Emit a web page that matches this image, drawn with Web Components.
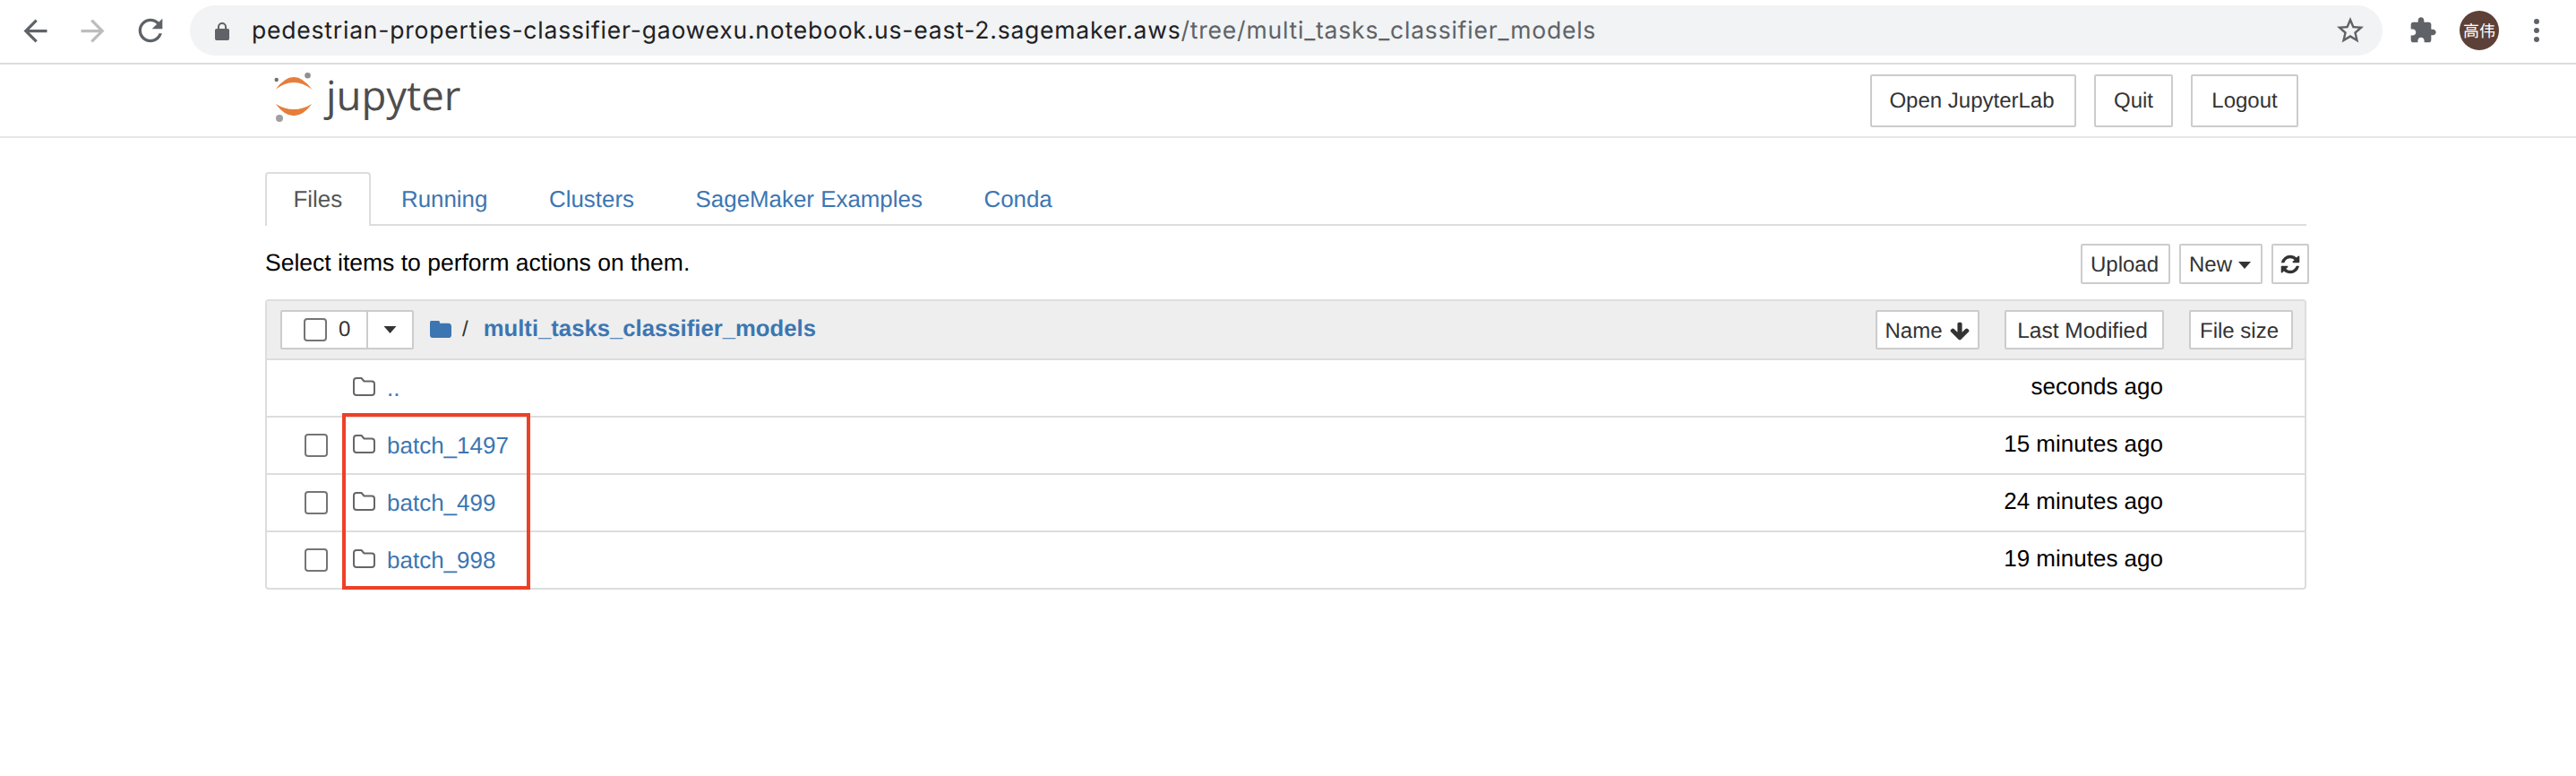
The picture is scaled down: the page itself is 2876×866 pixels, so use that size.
<!DOCTYPE html>
<html lang="en"><head><meta charset="utf-8"><title>Jupyter</title>
<style>html,body{margin:0;padding:0;background:#fff;font-family:"Liberation Sans",Arial,sans-serif;color:#333;text-rendering:geometricPrecision;}</style>
</head><body>
<browser-bar></browser-bar>
<jupyter-header></jupyter-header>
<main-area>
  <tab-strip></tab-strip>
  <file-toolbar></file-toolbar>
  <file-panel>
    <file-row name=".." date="seconds ago" noselect></file-row>
    <file-row name="batch_1497" date="15 minutes ago"></file-row>
    <file-row name="batch_499" date="24 minutes ago"></file-row>
    <file-row name="batch_998" date="19 minutes ago"></file-row>
    <red-highlight slot="overlay"></red-highlight>
  </file-panel>
</main-area>
<script>
function def(name, css, html, setup){
  customElements.define(name, class extends HTMLElement{
    constructor(){super();const r=this.attachShadow({mode:'open'});
      r.innerHTML='<style>'+css+'</style>'+(typeof html==='function'?html(this):html);}
    connectedCallback(){
      if(setup) setup(this,this.shadowRoot);
    }
  });
}
const BLUE='#3c76b2';
const BTN='box-sizing:border-box;display:inline-flex;align-items:center;justify-content:center;background:#fff;border:2px solid #ccc;color:#333;font-size:24px;padding-top:2px;';

def('browser-bar',`
:host{display:flex;box-sizing:border-box;height:72px;border-bottom:2px solid #dcdcdc;align-items:center;padding:0 0 2px 0;background:#fff}
svg{display:block;flex:none}
.nav{display:flex;align-items:center;padding-left:20px;width:212px;box-sizing:border-box}
.omni{box-sizing:border-box;width:2448px;height:56px;border-radius:28px;background:#f1f3f4;display:flex;align-items:center;padding-left:28px;flex:none}
.url{font:26.5px Inter,Roboto,"Liberation Sans",sans-serif;color:#202124;margin-left:25px;flex:1;white-space:nowrap;letter-spacing:.79px}
.url span{color:#5f6368}
.star{margin-right:18px}
.right{display:flex;align-items:center;margin-left:29px}
.avatar{width:44px;height:44px;border-radius:50%;background:#5d4037;color:#fff;display:flex;align-items:center;justify-content:center;font:18px "Noto Sans CJK SC",sans-serif;margin-left:25px}
.dots{margin-left:39px}
`,`<div class="nav">
<svg width="39" height="39" viewBox="0 0 24 24" fill="#5f6368"><path d="M20 11H7.830l5.590-5.590L12 4l-8 8 8 8 1.410-1.410L7.830 13H20v-2z"/></svg>
<svg style="margin-left:25px" width="39" height="39" viewBox="0 0 24 24" fill="#bdbdbd"><path d="M4 11h12.170l-5.590-5.590L12 4l8 8-8 8-1.410-1.410L16.170 13H4v-2z"/></svg>
<svg style="margin-left:25px" width="40" height="40" viewBox="0 0 24 24" fill="#5f6368"><path d="M17.650 6.350C16.200 4.900 14.210 4 12 4c-4.420 0-7.990 3.580-7.990 8s3.570 8 7.990 8c3.730 0 6.840-2.550 7.730-6h-2.080c-.82 2.330-3.040 4-5.650 4-3.310 0-6-2.690-6-6s2.690-6 6-6c1.660 0 3.140.69 4.220 1.780L13 11h7V4l-2.350 2.350z"/></svg>
</div>
<div class="omni">
<svg width="16" height="21" viewBox="0 0 16 21" fill="#5f6368"><path d="M3 8V6a5 5 0 0 1 10 0v2h1.200A1.800 1.800 0 0 1 16 9.800v9.400a1.800 1.800 0 0 1-1.800 1.800H1.800A1.800 1.800 0 0 1 0 19.200V9.800A1.800 1.800 0 0 1 1.800 8H3zm2 0h6V6a3 3 0 0 0-6 0v2z"/></svg>
<div class="url">pedestrian-properties-classifier-gaowexu.notebook.us-east-2.sagemaker.aws<span>/tree/multi_tasks_classifier_models</span></div>
<svg class="star" width="36" height="36" viewBox="0 0 24 24" fill="#5f6368"><path d="M22 9.240l-7.190-.62L12 2 9.190 8.630 2 9.240l5.460 4.730L5.820 21 12 17.270 18.180 21l-1.630-7.030L22 9.240zM12 15.400l-3.760 2.270 1-4.280-3.320-2.880 4.380-.38L12 6.100l1.710 4.040 4.380.38-3.320 2.880 1 4.280L12 15.400z"/></svg>
</div>
<div class="right">
<svg width="32" height="32" viewBox="0 0 24 24" fill="#5f6368"><path d="M20.500 11H19V7c0-1.100-.9-2-2-2h-4V3.500C13 2.120 11.880 1 10.500 1S8 2.120 8 3.500V5H4c-1.100 0-1.990.9-1.990 2v3.800H3.500c1.490 0 2.700 1.210 2.700 2.700s-1.210 2.700-2.700 2.700H2V20c0 1.100.9 2 2 2h3.800v-1.500c0-1.490 1.210-2.700 2.700-2.700 1.490 0 2.700 1.210 2.700 2.700V22H17c1.100 0 2-.9 2-2v-4h1.500c1.380 0 2.500-1.120 2.500-2.500S21.880 11 20.500 11z"/></svg>
<div class="avatar">高伟</div>
<svg class="dots" width="6" height="26" viewBox="0 0 6 26" fill="#5f6368"><circle cx="3" cy="3" r="3"/><circle cx="3" cy="13" r="3"/><circle cx="3" cy="23" r="3"/></svg>
</div>`);

def('jupyter-header',`
:host{display:flex;box-sizing:border-box;height:82px;border-bottom:2px solid #e7e7e7;align-items:center;padding-left:306px;background:#fff}
svg{display:block;flex:none}
.name{font:45.5px "Open Sans",sans-serif;color:#4e4e4e;margin-left:12px;line-height:60px;margin-top:-13px;width:1724px;flex:none}
.btn{${BTN}height:59px;margin-right:20px;border-radius:2px}
`,`<svg width="46" height="58" viewBox="306 82 46 58" style="margin-top:-8px">
<path fill="#e67e3a" d="M307.700 102.700Q328 75.300 348.300 102.700Q328 87.300 307.700 102.700z"/>
<path fill="#e67e3a" d="M307.700 119Q328 145.600 348.300 119Q328 131 307.700 119z"/>
<circle cx="343.500" cy="87.300" r="3.300" fill="#8f8f8f"/><circle cx="308.700" cy="92" r="2.200" fill="#6f6f6f"/><circle cx="312" cy="135" r="4" fill="#a0a0a0"/></svg>
<div class="name">jupyter</div>
<div class="btn" style="width:230px;padding-right:3px">Open JupyterLab</div>
<div class="btn" style="width:88px">Quit</div>
<div class="btn" style="width:120px">Logout</div>`);

def('main-area',`:host{display:block;box-sizing:border-box;padding:38px 0 0 296px;width:2575px}`,`<slot></slot>`);

def('tab-strip',`
:host{display:flex;box-sizing:border-box;height:60px;border-bottom:2px solid #ddd;font-size:25.9px}
.t{box-sizing:border-box;height:60px;padding:0 32.3px;display:flex;align-items:center;color:${BLUE};border:2px solid transparent;border-bottom:0}
.t.on{color:#555;background:#fff;border-color:#ddd;border-radius:4px 4px 0 0;padding:0 29.5px;}
`,`<div class="t on">Files</div><div class="t">Running</div><div class="t">Clusters</div><div class="t">SageMaker Examples</div><div class="t">Conda</div>`);

def('file-toolbar',`
:host{display:flex;align-items:center;height:82px;color:#000;font-size:25.7px;justify-content:space-between}
.txt{margin-top:0;font-size:26.5px}
.g{display:flex;gap:10px;margin-right:-3px;margin-top:3px}
.btn{${BTN}height:45px;border-radius:2px}
svg{display:block}
`,`<div class="txt">Select items to perform actions on them.</div>
<div class="g"><div class="btn" style="width:100px;padding-right:2px">Upload</div>
<div class="btn" style="width:93px;padding-right:2px">New<svg style="margin-left:7px" width="14" height="8" viewBox="0 0 14 8" fill="#333"><path d="M0 0h14L7 8z"/></svg></div>
<div class="btn" style="width:42px;padding:0"><svg width="24" height="24" viewBox="0 0 1792 1792" fill="#333"><path d="M1639 1056q0 5-1 7-64 268-268 434.500t-478 166.500q-146 0-282.500-55t-243.500-157l-129 129q-19 19-45 19t-45-19-19-45v-448q0-26 19-45t45-19h448q26 0 45 19t19 45-19 45l-137 137q71 66 161 102t187 36q134 0 250-65t186-179q11-17 53-117 8-23 30-23h192q13 0 22.500 9.500t9.500 22.500zm25-800v448q0 26-19 45t-45 19h-448q-26 0-45-19t-19-45 19-45l138-138q-148-137-349-137-134 0-250 65t-186 179q-11 17-53 117-8 23-30 23h-199q-13 0-22.500-9.500t-9.500-22.500v-7q65-268 270-434.500t480-166.500q146 0 284 55.500t245 156.500l130-129q19-19 45-19t45 19 19 45z"/></svg></div></div>`);

def('file-panel',`
:host{display:block;box-sizing:border-box;border:2px solid #ddd;border-radius:4px;position:relative}
.head{box-sizing:border-box;height:64px;background:#eee;display:flex;align-items:center;padding-left:15px;font-size:24px;color:#333}
.btn{${BTN}height:44px;border-radius:2px;padding-top:3px}
.grp{display:flex;width:149px;height:44px;box-sizing:border-box;border:2px solid #ccc;background:#fff;border-radius:2px;flex:none}
.l{width:96px;display:flex;align-items:center;box-sizing:border-box;padding-left:24px;border-right:2px solid #ccc}
.r{flex:1;display:flex;align-items:center;justify-content:center}
.cb{box-sizing:border-box;width:26px;height:26px;border:2px solid #757575;border-radius:4px;background:#fff}
.zero{margin-left:13px}
.path{display:flex;align-items:center;margin:-1px 0 0 18px;flex:1}
.sl{margin:0 17px 0 12px}
.crumb{font-weight:bold;color:${BLUE};font-size:25.7px}
.sort{display:flex;margin-right:13px}
svg{display:block}
`,`<div class="head">
<div class="grp"><div class="l"><div class="cb"></div><span class="zero">0</span></div><div class="r"><svg width="15" height="8" viewBox="0 0 14 8" fill="#333"><path d="M0 0h14L7 8z"/></svg></div></div>
<div class="path"><svg width="24" height="20" viewBox="64 192 1664 1408" preserveAspectRatio="none" fill="${BLUE}"><path d="M1728 608v704q0 92-66 158t-158 66h-1216q-92 0-158-66t-66-158v-960q0-92 66-158t158-66h320q92 0 158 66t66 158v32h672q92 0 158 66t66 158z"/></svg><span class="sl">/</span><span class="crumb">multi_tasks_classifier_models</span></div>
<div class="sort"><div class="btn" style="width:116px">Name<svg style="margin-left:7px" width="24" height="24" viewBox="0 0 1792 1792" fill="#333"><path d="M1675 832q0 53-37 90l-651 652q-39 37-91 37-53 0-90-37l-651-652q-38-36-38-90 0-53 38-91l74-75q39-37 91-37 53 0 90 37l294 294v-704q0-52 38-90t90-38h128q52 0 90 38t38 90v704l294-294q37-37 90-37 52 0 91 37l75 75q37 39 37 91z"/></svg></div>
<div class="btn" style="width:178px;margin-left:28px;font-size:24.5px;padding-right:4px">Last Modified</div>
<div class="btn" style="width:116px;margin-left:28px;padding-right:4px">File size</div></div>
</div><slot></slot><slot name="overlay"></slot>`);

def('file-row',`
:host{display:flex;box-sizing:border-box;height:64px;border-top:2px solid #ddd;align-items:center;padding:0 158px 0 42px;font-size:26px;color:#000}
.cb{box-sizing:border-box;width:26px;height:26px;border:2px solid #757575;border-radius:4px;background:#fff;flex:none}
.cb.no{visibility:hidden}
svg{display:block;flex:none;margin:-3px 13px 0 28px}
a{color:${BLUE};flex:1;padding-top:1px;text-decoration:none}
.d{margin-top:-3px}
`,h=>`<div class="cb ${h.hasAttribute('noselect')?'no':''}"></div>
<svg width="25" height="21" viewBox="0 0 25 21" fill="none" stroke="#666" stroke-width="2" stroke-linejoin="round"><path d="M1 4a3 3 0 0 1 3-3h5.500l3 3.500H21a3 3 0 0 1 3 3V17a3 3 0 0 1-3 3H4a3 3 0 0 1-3-3z"/></svg>
<a>${h.getAttribute('name')}</a><div class="d">${h.getAttribute('date')}</div>`);

def('red-highlight',`:host{position:absolute;box-sizing:border-box;left:84px;top:125px;width:210px;height:197px;border:4px solid #ee4027}`,``);
</script>
</body></html>
